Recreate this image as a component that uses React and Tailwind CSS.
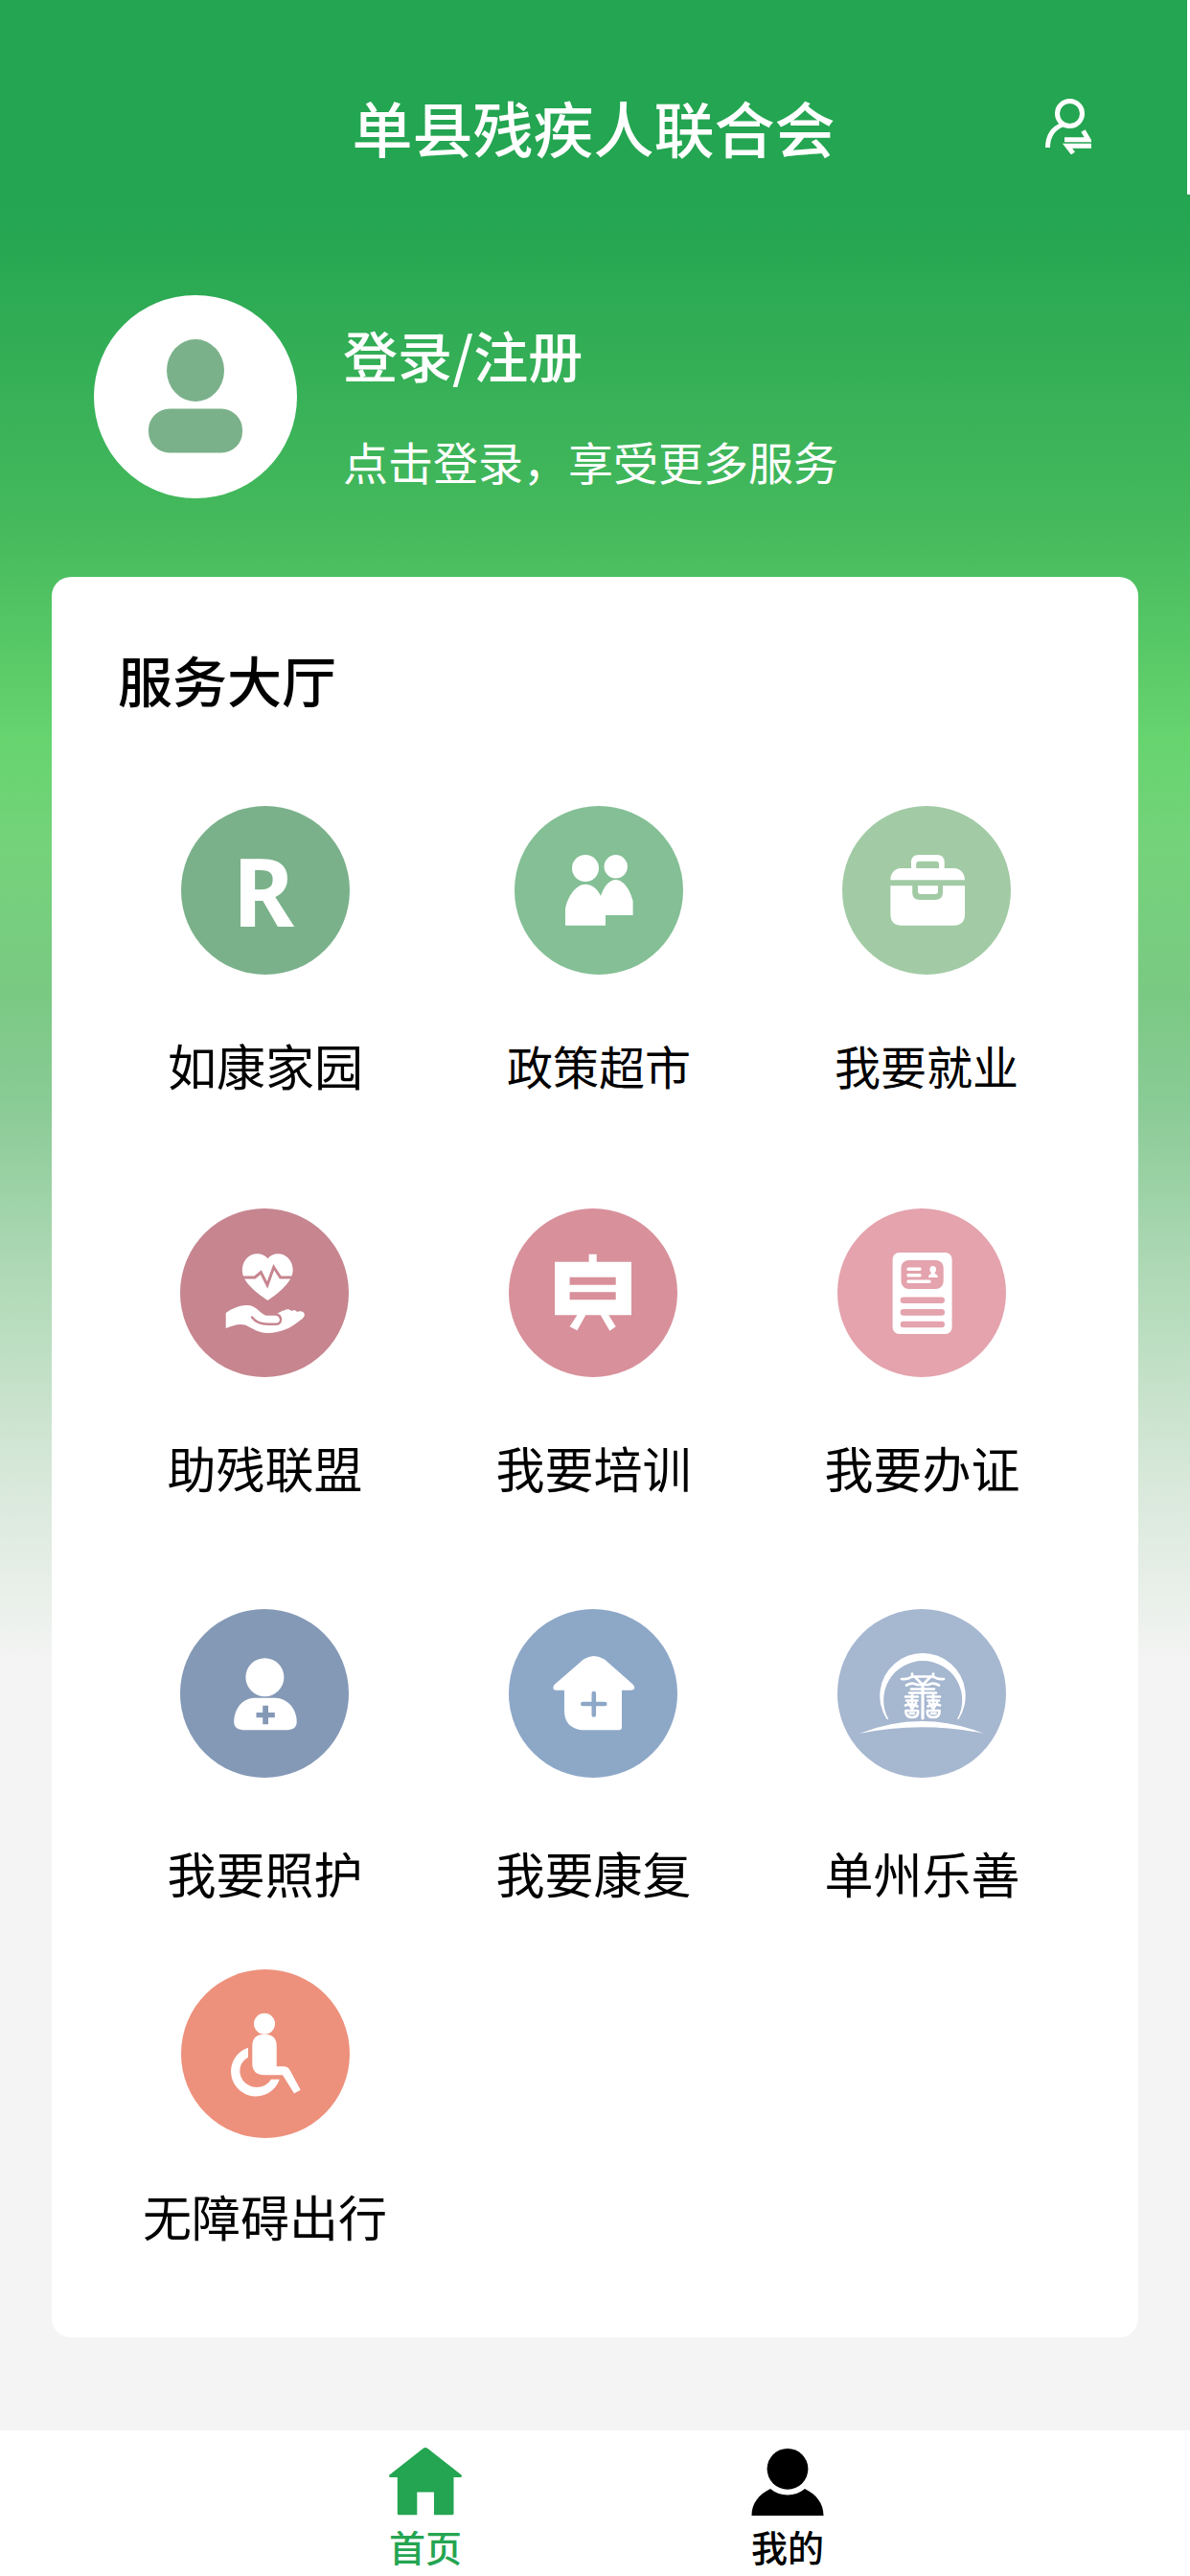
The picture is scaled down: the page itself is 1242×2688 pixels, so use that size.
import clsx from "clsx";

function RukangIcon() {
  return (
    <span className="pr-1 font-['Noto_Sans',sans-serif] text-[98px] font-bold leading-none text-white">R</span>
  );
}

function PolicyIcon() {
  return (
    <g fill="#fff">
      <circle cx="74" cy="65" r="14" />
      <circle cx="105.7" cy="63.3" r="12.2" />
      <path d="M53 124.7V108C55 95 64 81.7 74 81.7C81 81.7 87 87 90 94C93 84 99 77 105.7 77C114 77 121 88 123.6 99V114H95V124.7Z" />
    </g>
  );
}

function JobIcon() {
  return (
    <g fill="#fff">
      <path d="M50.4 77.3C50.4 70 55 65 61 65H72V59Q72 51 80 51H99Q106.7 51 106.7 59V65H117C123 65 128 70 128 77.3ZM77.2 65H101V61Q101 57.7 98 57.7H80.5Q77.2 57.7 77.2 61Z" fillRule="evenodd" />
      <path d="M50.4 83.3H73.2V90Q73.2 98 81 98H97Q105 98 105 90V83.3H128V113Q128 124.7 116 124.7H62Q50.4 124.7 50.4 113Z" />
      <path d="M79 83.3H100V89Q100 92 97 92H82Q79 92 79 89Z" />
    </g>
  );
}

function HelpIcon({ color }) {
  return (
    <g>
      <path fill="#fff" d="M91.4 52.3C97 45.5 107 46 112.5 51.5C118 57 119 65 116 72C112 80 102 89 91.4 96C81 89 70 80 66.5 72C63.5 65 64.5 57 70 51.5C75.5 46 86 45.5 91.4 52.3Z" />
      <path fill="none" stroke={color} strokeWidth="3" d="M62 72H78L84.3 66.7L91 80L97.7 61.3L104.7 72H120" />
      <path fill="#fff" d="M47.7 109C55 104 62 101 70 101C79 101 83 109 89.5 111.7H101L101 109.7C104 109 106 106.3 109 106.3C111 104.5 115 105 116 107C118 106 121 106 122 108C124 106.5 130 107 129.8 111C129.8 113 128.5 114 127 115.5C121 120 118 122.5 113 125C105 128.5 98 130 91.4 130C82 130 75 125 69 122C63 119.5 56 121.5 47.7 125Z" />
      <path fill="none" stroke={color} strokeWidth="2.4" strokeLinecap="round" d="M75 113.5C79 119 84 120.7 92 120.7H100C104 120.7 105.5 118 105 115C104.5 112.5 103 111 100.5 110.5" />
    </g>
  );
}

function TrainingIcon({ color }) {
  return (
    <g fill="#fff">
      <path d="M48 55.7H83.6V47.7H91.7V55.7H128V111.3H104.3L111.7 123.3L105.4 127.7L95.8 111.3H80.3L71.4 127.3L63.6 123.3L71.4 111.3H48Z" />
      <path fill={color} d="M63.6 71.7H111.7V79.7H63.6ZM63.6 87.3H111.7V95.3H63.6Z" />
    </g>
  );
}

function CertificateIcon({ color }) {
  return (
    <g>
      <rect x="57.6" y="46" width="62" height="85" rx="7" fill="#fff" />
      <rect x="66.5" y="54" width="44.2" height="30" rx="8" fill={color} />
      <path fill="none" stroke="#fff" strokeWidth="3.4" strokeLinecap="round" d="M74 63.3H86M74 69.8H86M74 76.2H96" />
      <ellipse cx="99.7" cy="63.7" rx="3.3" ry="3.6" fill="#fff" />
      <path fill="#fff" d="M98 65H101.5V68Q105 69 105 72H95Q95 69 98 68Z" />
      <path fill="none" stroke={color} strokeWidth="6.6" strokeLinecap="round" d="M69 95.7H108.7M69 108.4H108.7M69 121H108.7" />
    </g>
  );
}

function CareIcon({ color }) {
  return (
    <g>
      <circle cx="88.4" cy="71.2" r="20" fill="#fff" />
      <path fill="#fff" d="M56.2 118C56.2 103 66 92.7 78 92.7H99C111 92.7 121.7 103 121.7 118C121.7 124 117 126.3 110 126.3H68C61 126.3 56.2 124 56.2 118Z" />
      <path fill={color} d="M86.2 100.7H92V108H98.8V113.3H92V120.3H86.2V113.3H79.5V108H86.2Z" />
    </g>
  );
}

function RehabIcon({ color }) {
  return (
    <g>
      <path fill="#fff" d="M78 52.5Q88.8 45.5 100 52.5L130 79Q133.5 84.7 127 84.7H118V123Q118 126.2 115 126.2H76Q58 124 58 106V84.7H51Q44 84.7 47.5 79Z" />
      <path fill="none" stroke={color} strokeWidth="4.6" strokeLinecap="round" d="M77.3 99H100.3M88.8 88V110.5" />
    </g>
  );
}

function CharityIcon() {
  return (
    <g>
      <path fill="#fff" d="M51.5 115A44.7 44.7 0 1 1 126.5 115L125 115A41 41 0 1 0 53.4 115Z" />
      <path fill="#fff" d="M22.7 130Q88 104 153.3 130Q88 116.5 22.7 130Z" />
      <g fill="none" stroke="#fff" strokeWidth="2.7" strokeLinecap="round" strokeLinejoin="round">
        <path d="M67 73Q73 74 78 70.5H100Q105 74 111 73M78 67.5V71M100 67.5V71" />
        <path d="M81 71L89 79L97 71M72 79.5Q78 76 83 79H95Q100 76 106 79.5M77 83.5H101M75 87.5H103" />
        <path d="M89 79V114" strokeWidth="3.2" />
        <path d="M71 91.5H84M78 89V98M72 95.5H83.5M71 100.5Q78 98 83.5 101.5M74 98L78 104L82 98M71.5 106H84Q85 113 78 113T71.5 106M75.5 109H80" />
        <path d="M107 91.5H94M100 89V98M106 95.5H94.5M107 100.5Q100 98 94.5 101.5M104 98L100 104L96 98M106.5 106H94Q93 113 100 113T106.5 106M102.5 109H98" />
      </g>
    </g>
  );
}

function AccessibleIcon() {
  return (
    <g fill="#fff">
      <circle cx="87" cy="56.7" r="11" />
      <path d="M74.3 80Q74.3 67.7 87 67.7Q99.7 67.7 99.7 80V101.3H107Q111.5 101.3 113.5 105L124.7 125.7L118 129.5L106 110.3H87Q74.3 110.3 74.3 98Z" />
      <path d="M70 81.7A26 26 0 1 0 102.7 114.7H94Q89 123 78.5 123C69 123 61.3 115 61.3 106Q61.3 97 70 91.7Z" />
    </g>
  );
}

const rows = [
  {
    className: "pr-[50px] pl-[46px]",
    gap: "gap-16",
    items: [
      { name: "如康家园", color: "#7ab18a", textIcon: true, Icon: RukangIcon },
      { name: "政策超市", color: "#84bf95", Icon: PolicyIcon, small: true },
      { name: "我要就业", color: "#a2cba5", Icon: JobIcon, small: true },
    ],
  },
  {
    className: "mt-[120px] pr-[54px] pl-[51px]",
    gap: "gap-16",
    items: [
      { name: "助残联盟", color: "#c6858f", Icon: HelpIcon },
      { name: "我要培训", color: "#d8909b", Icon: TrainingIcon },
      { name: "我要办证", color: "#e4a3ad", Icon: CertificateIcon },
    ],
  },
  {
    className: "mt-[118px] pr-[54px] pl-[51px]",
    gap: "gap-[69px]",
    items: [
      { name: "我要照护", color: "#8499b6", Icon: CareIcon },
      { name: "我要康复", color: "#8da7c7", Icon: RehabIcon },
      { name: "单州乐善", color: "#a6b7d0", Icon: CharityIcon },
    ],
  },
];

function ServiceItem({ item, gap }) {
  const { name, color, Icon, textIcon, small } = item;
  return (
    <a href="#" className={clsx("flex flex-col items-center", gap)}>
      <span
        className="flex size-44 items-center justify-center overflow-hidden rounded-full"
        style={{ backgroundColor: color }}
      >
        {textIcon ? (
          <Icon />
        ) : (
          <svg viewBox="0 0 176 176" className="size-44" aria-hidden="true">
            <Icon color={color} />
          </svg>
        )}
      </span>
      <span className={clsx("leading-[60px] whitespace-nowrap", small ? "text-[48px]" : "text-[51px]")}>
        {name}
      </span>
    </a>
  );
}

export default function App() {
  return (
    <div className="flex min-h-screen flex-col bg-[#f4f4f4] bg-[linear-gradient(180deg,#24a551_220px,#45b95c_546px,#66d46f_770px,#74d37a_880px,#7ac983_1038px,#8acb96_1153px,#afd9b6_1330px,#d7e8d9_1540px,#f4f4f4_1740px)] font-['Noto_Sans_CJK_SC',sans-serif] text-black">
      <header className="grid grid-cols-[1fr_auto_1fr] items-center border-r-[3px] border-white pt-[92px] pb-[31px] text-white">
        <h1 className="col-start-2 text-[63px] leading-[80px] font-medium">单县残疾人联合会</h1>
        <button type="button" aria-label="切换用户" className="mr-[100px] justify-self-end">
          <svg viewBox="0 0 48 58" className="h-[58px] w-12" fill="none" stroke="currentColor" strokeWidth="5" aria-hidden="true">
            <circle cx="25.5" cy="15.5" r="13" />
            <path d="M18 27C8 31 2.5 38 2.5 51" />
            <path d="M20 42.8H45L39.5 33.5M48 49.2H23L29 57" />
          </svg>
        </button>
      </header>

      <a href="#" className="mt-[105px] flex items-start gap-12 pl-[98px] text-white">
        <svg viewBox="0 0 212 212" className="size-[212px] shrink-0" aria-hidden="true">
          <circle cx="106" cy="106" r="106" fill="#fff" />
          <ellipse cx="106" cy="78.5" rx="30" ry="32.5" fill="#7ab18a" />
          <rect x="57" y="118.5" width="98" height="46" rx="22" fill="#7ab18a" />
        </svg>
        <div className="flex flex-col gap-10 pt-[21px]">
          <p className="text-[57px] leading-[80px] font-medium">登录/注册</p>
          <p className="text-[47px] leading-[64px]">点击登录，享受更多服务</p>
        </div>
      </a>

      <main className="mx-[54px] mt-[82px] mb-24 rounded-[20px] bg-white pt-[70px] pb-[97px]">
        <h2 className="mb-[97px] pl-[69px] text-[57px] leading-[72px] font-medium">服务大厅</h2>
        {rows.map((row, i) => (
          <div key={i} className={clsx("flex justify-around", row.className)}>
            {row.items.map((item) => (
              <ServiceItem key={item.name} item={item} gap={row.gap} />
            ))}
          </div>
        ))}
        <div className="mt-[71px] flex pl-[95px]">
          <ServiceItem item={{ name: "无障碍出行", color: "#ed917c", Icon: AccessibleIcon }} gap="gap-[51px]" />
        </div>
      </main>

      <nav className="mt-auto flex justify-center gap-[302px] bg-white pt-[18px] pb-[9px] pl-6 text-[38px] leading-[44px] font-medium">
        <a href="#" className="flex flex-col items-center gap-2.5 text-[#24a551]">
          <svg viewBox="0 0 76 71" className="h-[71px] w-[76px]" fill="currentColor" aria-hidden="true">
            <path d="M35.5 1Q38 -1 40.5 1L75.5 28.5Q77 31 74 31H67.5V69Q67.5 70.3 66 70.3H47V46.5H29.3V70.3H10Q8.8 70.3 8.8 69V31H2Q-1 31 .5 28.5Z" />
          </svg>
          首页
        </a>
        <a href="#" className="flex flex-col items-center gap-2.5">
          <svg viewBox="0 0 76 71" className="h-[71px] w-[76px]" fill="currentColor" aria-hidden="true">
            <circle cx="38" cy="22.3" r="21.4" />
            <path d="M20 43Q28 49.5 38 49.5T56 43C68 49 75.5 58 75.5 71H.5C.5 58 8 49 20 43Z" />
          </svg>
          我的
        </a>
      </nav>
    </div>
  );
}
